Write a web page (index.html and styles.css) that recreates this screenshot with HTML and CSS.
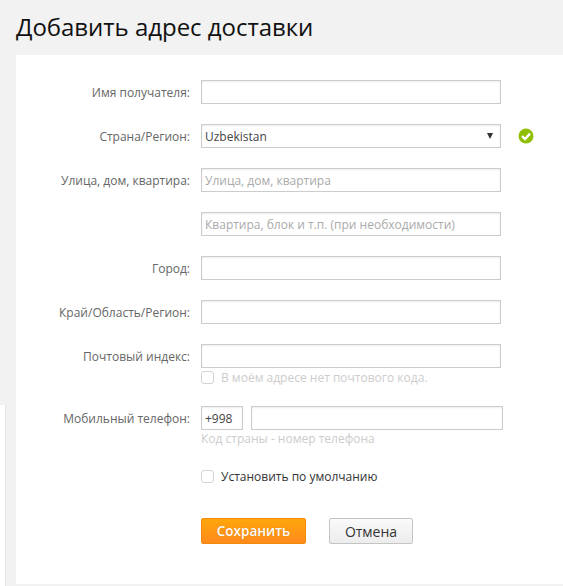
FILE: index.html
```html
<!DOCTYPE html>
<html lang="ru">
<head>
  <meta charset="UTF-8">
  <title>Добавить адрес доставки</title>
  <link rel="stylesheet" href="styles.css">
</head>
<body>

  <!-- LEFT STRIP -->
  <div class="side-strip"></div>

  <main class="page">
    <h1 class="page-title">Добавить адрес доставки</h1>

    <!-- ADDRESS FORM -->
    <form class="address-form">
      <div class="row">
        <label class="row-label" for="name">Имя получателя:</label>
        <input class="field" type="text" id="name">
      </div>

      <div class="row">
        <label class="row-label" for="country">Страна/Регион:</label>
        <div class="field select-field" id="country">
          <span>Uzbekistan</span>
          <span class="select-arrow"></span>
        </div>
        <svg class="ok-icon" viewBox="0 0 16 16" width="16" height="16">
          <circle cx="8" cy="8" r="7.5" fill="#8fbf00"/>
          <path d="M4 8.2 L7 11 L12 5.6" fill="none" stroke="#fff" stroke-width="2.4"/>
        </svg>
      </div>

      <div class="row">
        <label class="row-label" for="street">Улица, дом, квартира:</label>
        <input class="field" type="text" id="street" placeholder="Улица, дом, квартира">
      </div>

      <div class="row">
        <span class="row-label"></span>
        <input class="field" type="text" placeholder="Квартира, блок и т.п. (при необходимости)">
      </div>

      <div class="row">
        <label class="row-label" for="city">Город:</label>
        <input class="field" type="text" id="city">
      </div>

      <div class="row">
        <label class="row-label" for="region">Край/Область/Регион:</label>
        <input class="field" type="text" id="region">
      </div>

      <div class="row row-zip">
        <label class="row-label" for="zip">Почтовый индекс:</label>
        <input class="field" type="text" id="zip">
      </div>
      <div class="check-line check-muted">
        <span class="check-box"></span>
        <span>В моём адресе нет почтового кода.</span>
      </div>

      <div class="row row-phone">
        <label class="row-label" for="phone">Мобильный телефон:</label>
        <input class="field field-code" type="text" value="+998">
        <input class="field field-phone" type="text" id="phone">
      </div>
      <p class="hint">Код страны - номер телефона</p>

      <div class="check-line check-default">
        <span class="check-box"></span>
        <span>Установить по умолчанию</span>
      </div>

      <div class="actions">
        <button type="button" class="btn-save">Сохранить</button>
        <button type="button" class="btn-cancel">Отмена</button>
      </div>
    </form>
  </main>

</body>
</html>
```

FILE: styles.css
```css
/* ===== GENERAL ===== */
html, body {
  height: 100%;
}
body {
  margin: 0;
  background: #f2f2f2;
  font-family: "Open Sans", sans-serif;
  font-size: 12px;
  color: #333;
  overflow: hidden;
}
.side-strip {
  position: absolute;
  left: 0;
  top: 405px;
  bottom: 0;
  width: 5px;
  background: #fff;
  border-right: 1px solid #e6e6e6;
}
.page {
  position: relative;
  padding-left: 16px;
}
.page-title {
  margin: 0;
  height: 55px;
  font-size: 24px;
  font-weight: 400;
  line-height: 53px;
  letter-spacing: -0.03px;
  color: #111;
}

/* ===== FORM ===== */
.address-form {
  background: #fff;
  height: 504px;
  padding-top: 25px;
  padding-left: 185px;
}
.row {
  position: relative;
  display: flex;
  align-items: center;
  gap: 8px;
  height: 24px;
  margin-bottom: 20px;
}
.row-label {
  position: absolute;
  right: 100%;
  margin-right: 11px;
  white-space: nowrap;
  color: #666;
}
.field {
  box-sizing: border-box;
  width: 300px;
  height: 24px;
  padding: 0 3px;
  border: 1px solid #ccc;
  box-shadow: inset 0 1px 2px #ececec;
  background: #fff;
  font-family: inherit;
  font-size: 12px;
  color: #444;
  outline: none;
}
.field::placeholder {
  color: #aaa;
  opacity: 1;
}
.select-field {
  display: flex;
  align-items: center;
  justify-content: space-between;
}
.select-arrow {
  width: 0;
  height: 0;
  margin-right: 4px;
  border-left: 3px solid transparent;
  border-right: 3px solid transparent;
  border-top: 6px solid #333;
}
.ok-icon {
  margin-left: 9px;
}
.field-code {
  width: 42px;
}
.field-phone {
  width: 252px;
}
.row-zip {
  margin-bottom: 0;
}
.row-phone {
  margin-top: 20px;
  margin-bottom: 0;
}

/* ===== CHECKBOXES AND HINT ===== */
.check-line {
  display: flex;
  align-items: center;
  gap: 7px;
  height: 18px;
}
.check-box {
  box-sizing: border-box;
  width: 13px;
  height: 13px;
  border: 1px solid #d4d4d4;
  border-radius: 3px;
  background: #fff;
}
.check-muted {
  color: #ccc;
}
.check-default {
  margin-top: 20px;
  color: #333;
}
.hint {
  margin: 0;
  line-height: 17px;
  color: #ccc;
}

/* ===== BUTTONS ===== */
.actions {
  display: flex;
  gap: 23px;
  margin-top: 33px;
}
.btn-save {
  width: 105px;
  height: 26px;
  border: 1px solid #f08a0c;
  border-radius: 2px;
  background: linear-gradient(#ffa60a, #ff8a1e);
  color: #fff;
  font-family: inherit;
  font-size: 13.5px;
  font-weight: 600;
  padding: 0;
  text-shadow: 0 0 1px rgba(180, 90, 0, 0.6);
}
.btn-cancel {
  width: 84px;
  height: 26px;
  border: 1px solid #c4c4c4;
  border-radius: 2px;
  background: linear-gradient(#fafafa, #ececec);
  color: #333;
  font-family: inherit;
  font-size: 14px;
  padding: 0;
}
```
